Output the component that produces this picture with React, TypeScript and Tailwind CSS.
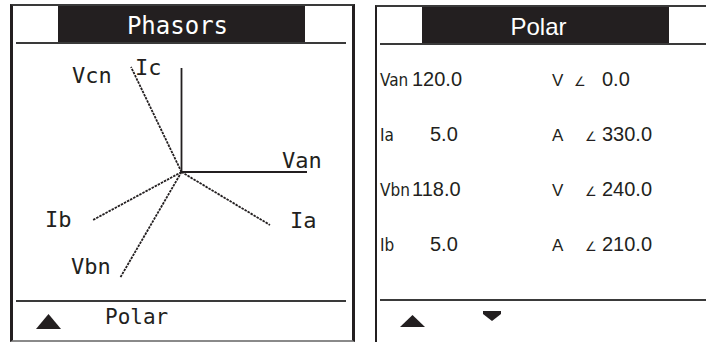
import React from 'react';

const ink = '#231f20';

function UpArrow({ w, h }: { w: number; h: number }) {
  return (
    <svg width={w} height={h} viewBox={`0 0 ${w} ${h}`}>
      <polygon points={`${w / 2},0 ${w},${h} 0,${h}`} fill={ink} />
    </svg>
  );
}

function DownArrow() {
  return (
    <svg width="18" height="10" viewBox="0 0 18 10">
      <polygon points="0,0 18,0 18,3 9,10 0,3" fill={ink} />
    </svg>
  );
}

function Header({ title, shift }: { title: string; shift: string }) {
  return (
    <div className="flex h-[36px]">
      <div className="w-[45px] flex-none" />
      <div
        className={`w-[247px] flex-none bg-[#231f20] text-white flex items-center justify-center pt-[4px] text-[24px] leading-[24px] ${shift}`}
      >
        {title}
      </div>
      <div className="flex-1" />
    </div>
  );
}

function PhasorChart() {
  const labels = [
    { t: 'Vcn', x: 59, y: 39 },
    { t: 'Ic', x: 122, y: 31 },
    { t: 'Van', x: 269, y: 124 },
    { t: 'Ib', x: 32, y: 183 },
    { t: 'Ia', x: 277, y: 184 },
    { t: 'Vbn', x: 58, y: 230 },
  ];
  return (
    <svg width="339" height="256" viewBox="0 0 339 256" className="block">
      <g stroke={ink} strokeWidth="1.8" fill="none">
        <line x1="168.5" y1="24" x2="168.5" y2="128" />
        <line x1="168.5" y1="128" x2="294" y2="128" />
        <g strokeDasharray="2.5 1">
          <line x1="168.5" y1="128" x2="118" y2="23" />
          <line x1="168.5" y1="128" x2="80" y2="176" />
          <line x1="168.5" y1="128" x2="257" y2="181" />
          <line x1="168.5" y1="128" x2="107" y2="234" />
        </g>
      </g>
      {labels.map((l) => (
        <text
          key={l.t}
          x={l.x}
          y={l.y}
          fill={ink}
          fontSize="22"
          fontFamily="'DejaVu Sans Mono', monospace"
        >
          {l.t}
        </text>
      ))}
    </svg>
  );
}

const rows = [
  { label: 'Van', value: '120.0', pad: 'ml-0', unit: 'V', ang: 'ml-0', deg: '0.0' },
  { label: 'Ia', value: '5.0', pad: 'ml-[18px]', unit: 'A', ang: 'ml-[11px]', deg: '330.0' },
  { label: 'Vbn', value: '118.0', pad: 'ml-0', unit: 'V', ang: 'ml-[11px]', deg: '240.0' },
  { label: 'Ib', value: '5.0', pad: 'ml-[18px]', unit: 'A', ang: 'ml-[11px]', deg: '210.0' },
];

export default function App() {
  return (
    <div className="w-[706px] h-[342px] bg-white overflow-hidden flex items-start gap-[20px] pl-[10px] pt-[4px] font-['Liberation_Sans',sans-serif] text-[#231f20]">
      {/* Phasors screen */}
      <div className="w-[345px] h-[338px] flex-none flex flex-col border-x-[3px] border-x-[#231f20] border-t-2 border-t-[#3a3a3a] border-b-2 border-b-[#8a8a8a]">
        <Header title="Phasors" shift="font-['DejaVu_Sans_Mono',monospace] pr-[8px]" />
        <div className="h-[2px] bg-[#3a3a3a] ml-[3px] mr-[6px]" />
        <div className="h-[256px]">
          <PhasorChart />
        </div>
        <div className="h-[2px] bg-[#3a3a3a] ml-[3px] mr-[6px]" />
        <div className="flex items-start h-[36px]">
          <div className="ml-[23px] mt-[12px]">
            <UpArrow w={25} h={15} />
          </div>
          <span className="ml-[44px] mt-[4px] text-[21px] leading-[22px] font-['DejaVu_Sans_Mono',monospace]">
            Polar
          </span>
        </div>
      </div>

      {/* Polar screen */}
      <div className="w-[345px] h-[338px] flex-none flex flex-col mt-[1px] border-l-2 border-l-[#231f20] border-t-2 border-t-[#3a3a3a]">
        <Header title="Polar" shift="pr-[14px]" />
        <div className="h-[2px] bg-[#3a3a3a] ml-[3px]" />
        <div className="flex flex-col pt-[24px] h-[254px]">
          {rows.map((r) => (
            <div key={r.label} className="flex items-baseline h-[55px] text-[20px] leading-[20px]">
              <span className="w-[35px] flex-none pl-[3px] font-['Liberation_Sans_Narrow','DejaVu_Sans_Condensed',sans-serif] text-[17px] leading-[20px]">
                {r.label}
              </span>
              <span className="w-[140px] flex-none">
                <span className={r.pad}>{r.value}</span>
              </span>
              <span className="w-[22px] flex-none text-[17px]">{r.unit}</span>
              <span className="w-[28px] flex-none">
                <span className={`${r.ang} font-['DejaVu_Sans',sans-serif] text-[13px]`}>∠</span>
              </span>
              <span className="flex-none">{r.deg}</span>
            </div>
          ))}
        </div>
        <div className="h-[2px] bg-[#3a3a3a] ml-[3px]" />
        <div className="flex items-start h-[38px]">
          <div className="ml-[23px] mt-[14px]">
            <UpArrow w={25} h={12} />
          </div>
          <div className="ml-[58px] mt-[10px]">
            <DownArrow />
          </div>
        </div>
      </div>
    </div>
  );
}
